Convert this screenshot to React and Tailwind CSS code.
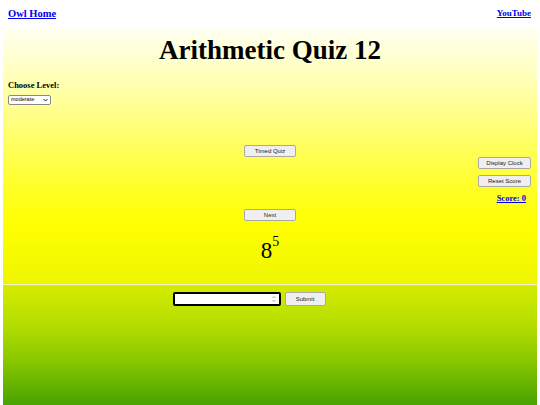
import React from "react";

const btn =
  "bg-[#efefef] border border-[#a9a9a9] rounded-[2px] text-[6px] text-[#222] font-['Liberation_Sans',Arial,sans-serif] leading-none flex items-center justify-center";

export default function App() {
  return (
    <div className="w-full min-h-[405px] bg-white font-['Liberation_Serif','Times_New_Roman',serif] text-black">
      {/* top links */}
      <div className="h-[27px] flex justify-between items-start px-[8px] pt-[9px] text-[10.5px] font-bold leading-none">
        <a href="#" className="text-[#0000ee] underline">Owl Home</a>
        <a href="#" className="text-[#0000ee] underline text-[9px] pr-[1px]">YouTube</a>
      </div>

      {/* quiz area */}
      <div className="mx-[3px] h-[256px] bg-[linear-gradient(to_bottom,#fffff4_0%,#ffffa8_25%,#ffff30_60%,#ffff00_78%,#eef600_100%)] flex flex-col">
        <h1 className="text-center text-[27px] font-bold leading-none mt-[10px]">Arithmetic Quiz 12</h1>

        <div className="px-[5px] mt-[17px] text-[8.5px] font-bold leading-none">Choose Level:</div>
        <div className="px-[5px] mt-[5px]">
          <div className="w-[43px] h-[10px] bg-white border border-[#888] rounded-[2px] flex items-center justify-between px-[2px] text-[5.5px] font-['Liberation_Sans',Arial,sans-serif] leading-none">
            <span>moderate</span>
            <svg width="5" height="4" viewBox="0 0 10 8">
              <path d="M1 2 L5 6 L9 2" stroke="#222" strokeWidth="2" fill="none" />
            </svg>
          </div>
        </div>

        <div className="flex justify-center mt-[40px]">
          <button className={`${btn} w-[52px] h-[12px]`}>Timed Quiz</button>
        </div>

        <div className="flex flex-col items-end pr-[6px]">
          <button className={`${btn} w-[53px] h-[12px]`}>Display Clock</button>
          <button className={`${btn} w-[53px] h-[12px] mt-[6px]`}>Reset Score</button>
          <a href="#" className="mt-[7px] mr-[5px] text-[8.5px] font-bold text-[#0000ee] underline leading-none">Score: 0</a>
        </div>

        <div className="flex justify-center mt-[7px]">
          <button className={`${btn} w-[52px] h-[12px]`}>Next</button>
        </div>

        <div className="flex justify-center mt-[18px] leading-none">
          <span className="text-[23px]">8</span>
          <span className="text-[14px] -mt-[4px]">5</span>
        </div>
      </div>

      <div className="mx-[3px] h-[2px] bg-[#dcdc9a] border-b border-[#f4f4c8]"></div>

      {/* answer area */}
      <div className="mx-[3px] h-[120px] bg-[linear-gradient(to_bottom,#d6ec00_0%,#b2dc00_35%,#86c600_65%,#48a200_100%)] pt-[7px] pr-[42px] flex justify-center gap-[4px]">
        <div className="w-[108px] h-[14px] bg-white border-2 border-black rounded-[2px] flex items-center justify-end pr-[3px]">
          <svg width="4" height="8" viewBox="0 0 4 8">
            <path d="M0.5 3 L2 1.5 L3.5 3" stroke="#888" strokeWidth="0.7" fill="none" />
            <path d="M0.5 5 L2 6.5 L3.5 5" stroke="#888" strokeWidth="0.7" fill="none" />
          </svg>
        </div>
        <button className={`${btn} w-[41px] h-[14px]`}>Submit</button>
      </div>
    </div>
  );
}
